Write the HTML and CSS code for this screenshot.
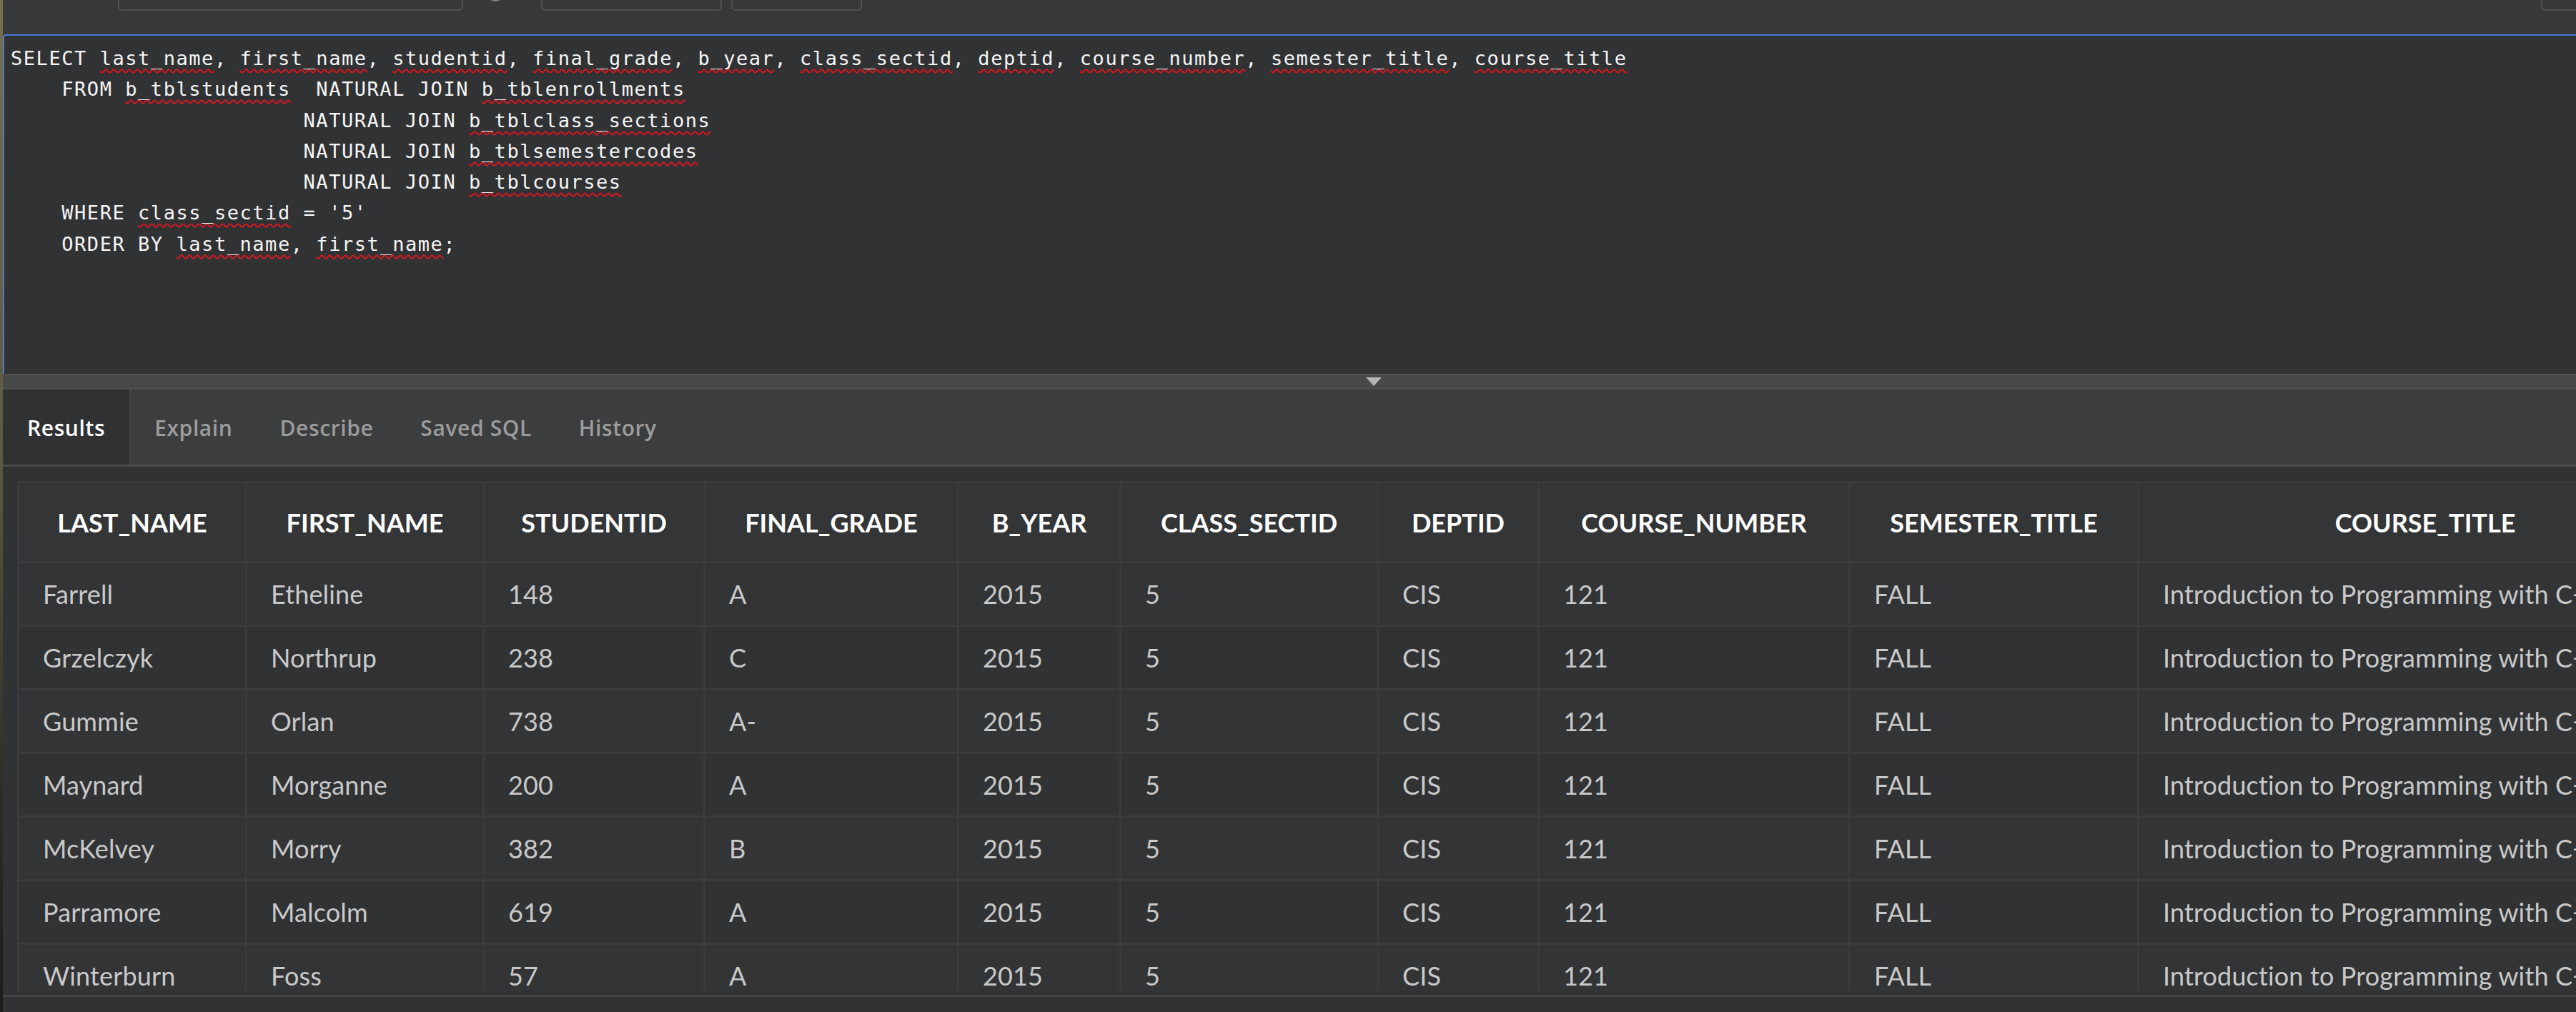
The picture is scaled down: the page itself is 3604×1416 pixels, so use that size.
FILE: index.html
```html
<!DOCTYPE html>
<html lang="en">
<head>
<meta charset="utf-8">
<title>SQL Workshop</title>
<link rel="stylesheet" href="styles.css">
</head>
<body>
<div class="desk">
  <div class="edge"></div>
  <div class="app">
    <header class="toolbar">
      <div class="field field-schema"></div>
      <svg class="help" width="28" height="28" viewBox="0 0 28 28"><circle cx="14" cy="14" r="11.5" fill="none" stroke="#7d7e80" stroke-width="3"/></svg>
      <div class="field field-rows"></div>
      <div class="field field-save"></div>
      <div class="field field-run"></div>
    </header>

    <section class="editor">
<div class="line">SELECT <span class="sp">last_name</span>, <span class="sp">first_name</span>, <span class="sp">studentid</span>, <span class="sp">final_grade</span>, <span class="sp">b_year</span>, <span class="sp">class_sectid</span>, <span class="sp">deptid</span>, <span class="sp">course_number</span>, <span class="sp">semester_title</span>, <span class="sp">course_title</span></div>
<div class="line">    FROM <span class="sp">b_tblstudents</span>  NATURAL JOIN <span class="sp">b_tblenrollments</span></div>
<div class="line">                       NATURAL JOIN <span class="sp">b_tblclass_sections</span></div>
<div class="line">                       NATURAL JOIN <span class="sp">b_tblsemestercodes</span></div>
<div class="line">                       NATURAL JOIN <span class="sp">b_tblcourses</span></div>
<div class="line">    WHERE <span class="sp">class_sectid</span> = '5'</div>
<div class="line">    ORDER BY <span class="sp">last_name</span>, <span class="sp">first_name</span>;</div>
    </section>

    <div class="splitter"><span class="grip"></span></div>

    <nav class="tabs">
      <div class="tab active">Results</div>
      <div class="tab">Explain</div>
      <div class="tab">Describe</div>
      <div class="tab">Saved SQL</div>
      <div class="tab">History</div>
    </nav>

    <section class="results">
      <table class="grid">
        <thead>
          <tr>
            <th class="w1">LAST_NAME</th>
            <th class="w2">FIRST_NAME</th>
            <th class="w3">STUDENTID</th>
            <th class="w4">FINAL_GRADE</th>
            <th class="w5">B_YEAR</th>
            <th class="w6">CLASS_SECTID</th>
            <th class="w7">DEPTID</th>
            <th class="w8">COURSE_NUMBER</th>
            <th class="w9">SEMESTER_TITLE</th>
            <th class="w10">COURSE_TITLE</th>
          </tr>
        </thead>
        <tbody>
          <tr><td>Farrell</td><td>Etheline</td><td>148</td><td>A</td><td>2015</td><td>5</td><td>CIS</td><td>121</td><td>FALL</td><td>Introduction to Programming with C++</td></tr>
          <tr><td>Grzelczyk</td><td>Northrup</td><td>238</td><td>C</td><td>2015</td><td>5</td><td>CIS</td><td>121</td><td>FALL</td><td>Introduction to Programming with C++</td></tr>
          <tr><td>Gummie</td><td>Orlan</td><td>738</td><td>A-</td><td>2015</td><td>5</td><td>CIS</td><td>121</td><td>FALL</td><td>Introduction to Programming with C++</td></tr>
          <tr><td>Maynard</td><td>Morganne</td><td>200</td><td>A</td><td>2015</td><td>5</td><td>CIS</td><td>121</td><td>FALL</td><td>Introduction to Programming with C++</td></tr>
          <tr><td>McKelvey</td><td>Morry</td><td>382</td><td>B</td><td>2015</td><td>5</td><td>CIS</td><td>121</td><td>FALL</td><td>Introduction to Programming with C++</td></tr>
          <tr><td>Parramore</td><td>Malcolm</td><td>619</td><td>A</td><td>2015</td><td>5</td><td>CIS</td><td>121</td><td>FALL</td><td>Introduction to Programming with C++</td></tr>
          <tr><td>Winterburn</td><td>Foss</td><td>57</td><td>A</td><td>2015</td><td>5</td><td>CIS</td><td>121</td><td>FALL</td><td>Introduction to Programming with C++</td></tr>
        </tbody>
      </table>
    </section>
    <div class="results-foot"></div>
  </div>
</div>
</body>
</html>
```

FILE: styles.css
```css
html, body {
  margin: 0;
  padding: 0;
}
body {
  width: 3604px;
  height: 1416px;
  overflow: hidden;
  background: #2a2a26;
  font-family: "Open Sans", "Noto Sans", sans-serif;
}
.desk {
  display: flex;
  height: 1416px;
}
.edge {
  width: 4px;
  flex: none;
  background: linear-gradient(#75704b, #5c5a3e 45%, #2b2b27 80%, #1c1c1b);
}
.app {
  width: 3836px;
  flex: none;
  height: 1416px;
  display: flex;
  flex-direction: column;
  background: #313234;
}

/* toolbar */
.toolbar {
  height: 48px;
  flex: none;
  box-sizing: border-box;
  background: #37383a;
  display: flex;
  align-items: flex-start;
  padding-left: 161px;
}
.field {
  height: 40px;
  margin-top: -25px;
  box-sizing: border-box;
  border: 2px solid #4f5053;
  border-radius: 6px;
  flex: none;
}
.field-schema { width: 483px; }
.help {
  flex: none;
  margin-left: 31px;
  margin-top: -25px;
}
.field-rows { width: 253px; margin-left: 50px; }
.field-save { width: 183px; margin-left: 13px; }
.field-run { width: 255px; margin-left: auto; margin-right: 30px; }

/* editor */
.editor {
  height: 475px;
  flex: none;
  box-sizing: border-box;
  background: #313234;
  border-top: 2px solid #4a7bd2;
  border-left: 2px solid #4a7bd2;
  border-top-left-radius: 4px;
  padding: 10px 0 0 9px;
  color: #f6f6f6;
  font-family: "DejaVu Sans Mono", "Liberation Mono", monospace;
  font-size: 27px;
  letter-spacing: 1.55px;
  line-height: 43.3px;
}
.line {
  white-space: pre;
  height: 43.3px;
}
.sp {
  text-decoration: underline wavy #e0141c;
  text-decoration-thickness: 1.5px;
  text-underline-offset: 5px;
  text-decoration-skip-ink: none;
}

/* splitter */
.splitter {
  height: 22px;
  flex: none;
  box-sizing: border-box;
  background: #47484a;
  border-top: 2px solid #515255;
  border-bottom: 3px solid #4c4d50;
  display: flex;
  justify-content: center;
  align-items: flex-start;
  padding-top: 3px;
}
.grip {
  width: 0;
  height: 0;
  border-left: 11px solid transparent;
  border-right: 11px solid transparent;
  border-top: 12px solid #b6b6b6;
}

/* tabs */
.tabs {
  height: 108px;
  flex: none;
  box-sizing: border-box;
  background: #3c3d3f;
  border-bottom: 3px solid #48494b;
  display: flex;
}
.tab {
  display: flex;
  align-items: center;
  padding: 2px 33px 0;
  font-family: "Open Sans", sans-serif;
  font-weight: 600;
  font-size: 30px;
  color: #9c9c9c;
  letter-spacing: 0.6px;
}
.tab.active {
  background: #303133;
  color: #ffffff;
  padding: 2px 34px 0;
  border-right: 2px solid #444547;
}

/* results */
.results {
  height: 734px;
  flex: none;
  box-sizing: border-box;
  overflow: hidden;
  padding: 20px 0 0 20px;
  background: #313234;
}
.grid {
  table-layout: fixed;
  width: 3772px;
  border-collapse: separate;
  border-spacing: 3px;
  background: #3a3b3d;
  font-family: Lato, "Open Sans", sans-serif;
}
.grid th,
.grid td {
  box-sizing: border-box;
  white-space: nowrap;
  overflow: hidden;
}
.grid th {
  height: 109px;
  background: #343537;
  color: #ffffff;
  font-weight: 700;
  font-size: 36px;
  text-align: center;
  padding: 0;
}
.grid td {
  height: 86px;
  background: #333436;
  color: #c9c9c9;
  font-weight: 400;
  font-size: 36px;
  letter-spacing: 0.15px;
  text-align: left;
  padding: 0 0 0 33px;
}
.grid tbody tr:nth-child(even) td {
  background: #313234;
}
.w1 { width: 316px; }
.w2 { width: 329px; }
.w3 { width: 306px; }
.w4 { width: 352px; }
.w5 { width: 224px; }
.w6 { width: 357px; }
.w7 { width: 222px; }
.w8 { width: 432px; }
.w9 { width: 401px; }
.w10 { width: 800px; }

.results-foot {
  flex: 1;
  margin-top: 5px;
  border-top: 3px solid #444548;
  background: #313234;
}
```
